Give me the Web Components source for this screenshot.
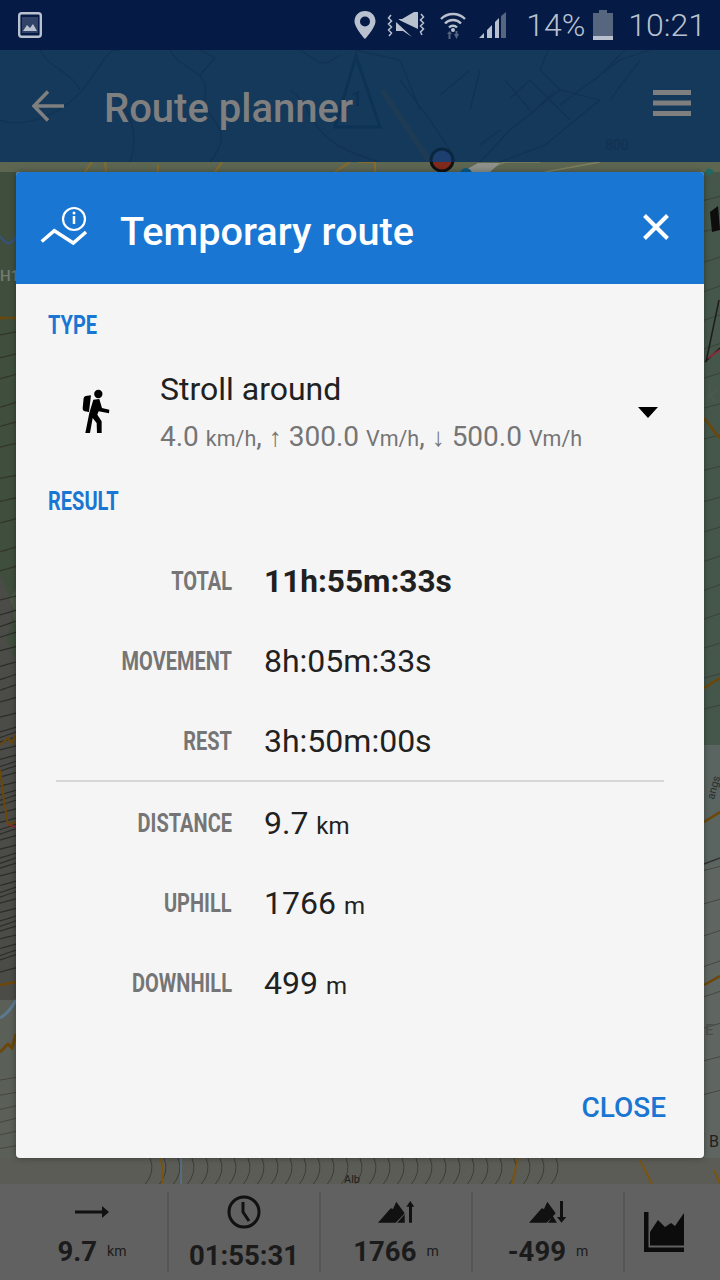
<!DOCTYPE html>
<html><head><meta charset="utf-8"><style>
html,body{margin:0;padding:0;width:720px;height:1280px;overflow:hidden;background:#555;font-family:Roboto,"Liberation Sans",sans-serif}
</style></head><body>
<route-screen></route-screen>
<script>
function def(name,css,html,extra){
  customElements.define(name,class extends HTMLElement{
    constructor(){super();this.attachShadow({mode:'open'}).innerHTML='<style>'+css+'</style>'+html;}
    connectedCallback(){if(extra)extra(this.shadowRoot,this);}
  });
}
/* map canvas */
function wave(y,amp,seed,x0,x1,slope){
  let d='';
  for(let x=x0;x<=x1;x+=4){
    const yy=y+amp*Math.sin(x/37+seed)+(slope||0)*(x-x0);
    d+=(d?'L':'M')+x+' '+yy.toFixed(1);
  }
  return d;
}
def('map-canvas',`:host{display:block;position:absolute;inset:0}svg{display:block}text{font-family:Roboto,sans-serif}`,
`<svg width="720" height="1280" viewBox="0 0 720 1280">
<rect width="720" height="1280" fill="#4d5a47"/>
<rect x="0" y="160" width="720" height="14" fill="#5d6651"/>
<path d="M0 172H16V590L8 600 16 625V1160H0Z" fill="#404f3d"/>
<path d="M0 575L14 610 6 640 16 660V1000L0 1010Z" fill="#4b4b48"/>
<rect x="0" y="1000" width="16" height="160" fill="#5a5f58"/>
<rect x="704" y="172" width="16" height="580" fill="#45574b"/>
<rect x="704" y="745" width="16" height="415" fill="#5f6560"/>
<rect x="704" y="745" width="16" height="120" fill="#566461" opacity=".6"/>
<rect x="0" y="1158" width="720" height="30" fill="#5c5c56"/>
<g id="c" fill="none"></g>
<path d="M0 236Q10 250 16 236" stroke="#35537f" stroke-width="2" fill="none"/>
<path d="M0 318H16" stroke="#6c4708" stroke-width="2.5" stroke-dasharray="7 2" fill="none"/>
<path d="M0 745L8 738 12 743 16 734M0 770L4 800 8 825 16 822" stroke="#6c4708" stroke-width="2" fill="none"/>
<path d="M8 825l8 2" stroke="#8a2c3a" stroke-width="1.5" fill="none"/>
<path d="M0 985L16 982" stroke="#6c4708" stroke-width="2.5" fill="none"/>
<path d="M0 1018Q10 1012 16 1000" stroke="#5b7a8f" stroke-width="3" fill="none"/>
<path d="M0 1052L8 1044 12 1048 16 1034" stroke="#6c4708" stroke-width="3" fill="none"/>
<path d="M704 418L712 428 716 434 720 438" stroke="#6c4708" stroke-width="2.5" fill="none"/>
<path d="M704 688L720 678M704 822L720 812M704 985L720 976" stroke="#6c4708" stroke-width="2.5" fill="none"/>
<path d="M704 864L720 858" stroke="#333" stroke-width="1.5" fill="none"/>
<path d="M719 300L706 362M705 362L720 348" stroke="#1d1d1d" stroke-width="1.5" fill="none"/>
<path d="M708 358L720 350" stroke="#8a2c3a" stroke-width="2" fill="none"/>
<path d="M85 172L92 162M105 162L106 172M215 172L222 162M158 165V172M335 172L350 162M358 162H375V172" stroke="#8a6a28" stroke-width="2" fill="none"/>
<path d="M480 172L505 162H540M545 172L600 162" stroke="#7d7f5f" stroke-width="1.5" fill="none"/>
<path d="M462 172L478 163H500L490 172Z" fill="#8e918a"/>
<path d="M708 168l6 3-5 5-4-4z" fill="#1f6a62"/>
<circle cx="466" cy="174" r="6" fill="#0c5a83"/>
<circle cx="442" cy="160" r="11" fill="#7f2a1c" stroke="#111" stroke-width="3"/>
<path d="M710 212l8-6 2 24-8 2z" fill="#0d0d0d"/>
<text x="0" y="281" font-size="15" font-weight="500" fill="#757b73">H1</text>
<text x="706" y="402" font-size="22" font-style="italic" fill="#4a5a50">k</text>
<text transform="translate(714 800) rotate(-75)" font-size="11" fill="#2a2e2c">angs</text>
<text x="709" y="1147" font-size="16" fill="#1f1f1f">B</text>
<text x="705" y="1035" font-size="15" fill="#4a4e4a">E</text>
<text x="344" y="1183" font-size="11" fill="#1c1c1c">Alb</text>
</svg>`,(s)=>{
  const g=s.getElementById('c');let h='';
  const add=(y,a,seed,x0,x1,col,w,sl)=>{h+=`<path d="${wave(y,a,seed,x0,x1,sl)}" stroke="${col}" stroke-width="${w}"/>`;};
  for(let y=335,i=0;y<590;y+=24,i++)add(y-i%3*3,2,i,0,16,'#33352c',1.2,-.25);
  for(let y=600,i=0;y<980;y+=(y>720&&y<960?7:13),i++)add(y,2,i*1.4,0,16,'#2c2c29',1.2,-.3);
  for(let y=1080,i=0;y<1160;y+=14,i++)add(y,1.500,i,0,16,'#46463f',1,-.2);
  for(let y=200,i=0;y<740;y+=30,i++)add(y,2,i*.7,704,720,'#38423a',1,-.3);
  for(let y=870,i=0;y<1120;y+=32,i++)add(y,2,i*.9,704,720,'#45483f',1,-.3);
  for(let y=1160,i=0;y<7;y+=4,i++)add(y,5,i*.35,0,720,'#3d3d36',1,0);
  for(let x=150,i=0;x<560;x+=14,i++)h+=`<path d="M${x} 1158q6 14 -6 28" stroke="#3d3d36" stroke-width="1"/>`;
  h+='<path d="M160 1158Q164 1168 162 1184" stroke="#7a5510" stroke-width="2"/><path d="M181 1158V1184" stroke="#557391" stroke-width="1.500"/><path d="M518 1158L512 1184M640 1160L652 1184M714 1170L720 1184" stroke="#7a5510" stroke-width="2"/>';
  g.innerHTML=h;
});
/* status bar */
def('status-bar',`:host{display:flex;align-items:center;height:50px;background:#051a45;color:#b9c1cf;position:relative;font-weight:300;font-size:32px}
.l{margin-left:18px;display:block}.r{margin-left:auto;display:flex;align-items:center;padding-right:14px}
svg{display:block}span{line-height:50px}`,
`<svg class="l" width="24" height="26" viewBox="0 0 24 26"><rect x="1.200" y="1.200" width="21.600" height="23.600" rx="2.500" fill="none" stroke="#b9c1cf" stroke-width="2.400"/><rect x="4" y="5" width="16" height="16" fill="#b9c1cf" opacity=".25"/><path d="M5 19l4-6 3 3 3-4 4 7z" fill="#b9c1cf"/></svg>
<div class="r">
<svg width="22" height="28" viewBox="0 0 22 28"><path fill-rule="evenodd" d="M11 0C4.800 0 .5 4.500.5 10.300.5 17 11 28 11 28s10.500-11 10.500-17.700C21.500 4.500 17.200 0 11 0zm0 5.500a5 5 0 110 10 5 5 0 010-10z" fill="#b9c1cf"/></svg>
<svg style="margin-left:11px" width="38" height="26" viewBox="0 0 38 26"><path d="M10 7H15L27 0H31V17ZM9 10L25 25 16 19H9Z" fill="#b9c1cf"/><path d="M9 6L32 26" stroke="#051a45" stroke-width="1.500"/><path d="M4 3L1.500 6 4.500 9 1.500 12 4.500 15 1.500 18 4.500 21 2 24M34 2L36.500 5 33.500 8 36.500 11 33.500 14 36.500 17 33.500 20 35 23" fill="none" stroke="#b9c1cf" stroke-width="1.500"/></svg>
<svg style="margin-left:14px" width="28" height="27" viewBox="0 0 28 27"><path d="M2 7a17 17 0 0124 0M6 11.500a11 11 0 0116 0M10 15.500a5.500 5.500 0 018 0" fill="none" stroke="#b9c1cf" stroke-width="2.400"/><circle cx="14" cy="18" r="2" fill="#b9c1cf"/><path d="M8 22l2.500-3 2.500 3h-1.500v5h-2v-5zM15 22h1.500v-3h2v3h1.500l-2.500 5z" fill="#56667f"/></svg>
<svg style="margin-left:12px" width="27" height="26" viewBox="0 0 27 26"><path d="M0 26L5 21V26ZM8 26V18L13 13V26Z" fill="#b9c1cf"/><path d="M16 26V10L18 8 20 6V26Z" fill="#b9c1cf"/><path d="M22 26V4L27 0V26Z" fill="#56667f"/></svg>
<span style="margin-left:20px">14%</span>
<svg style="margin-left:8px" width="20" height="30" viewBox="0 0 20 30"><path d="M6 0h8v3h6v27H0V3h6z" fill="#56667f"/><rect y="26" width="20" height="4" fill="#b9c1cf"/></svg>
<span style="margin-left:15px">10:21</span>
</div>`);
/* app bar */
def('app-bar',`:host{display:flex;align-items:center;height:112px;background:#15395b;position:relative;color:#7f7f7f;overflow:hidden}
.bg{position:absolute;left:0;top:0}
.back,.title,.menu{position:relative}
.back{display:block;margin-left:32px}
.title{font-size:40px;font-weight:500;margin-left:39px;line-height:112px;margin-top:6px}
.menu{display:block;margin-left:auto;margin-right:29px;margin-top:-6px}
text{font-family:Roboto,sans-serif}`,
`<svg class="bg" width="720" height="112" viewBox="0 0 720 112" fill="none">
<g stroke="#123252" stroke-width="1.200">
<path d="M0 70C30 80 70 60 90 30S110 0 120 0M170 0C180 20 210 20 205 45S240 75 210 112M40 0C50 20 70 20 80 40M290 40C320 60 300 90 380 112M110 40C130 60 140 80 130 112"/>
<path d="M480 112L510 80 560 40 600 50 545 95 500 112M510 48L530 30 570 70M505 30L530 60M530 65L555 40M548 0L540 20 560 40M480 95L500 80M470 60L480 20M400 30L430 70 450 100"/>
<path d="M560 55L620 10 650 0M595 30L625 0M610 50L640 10M355 0L400 10 420 60"/>
<path d="M200 0L215 8 200 25M300 0C320 12 320 20 340 5M440 45L470 20"/>
</g>
<path d="M382 40L430 112" stroke="#1e3b55" stroke-width="6"/>
<path d="M335 77L356 6 380 77Z" stroke="#0c3355" stroke-width="3"/>
<circle cx="377" cy="47" r="4" fill="#123a5c"/>
<text x="351" y="56" font-size="20" font-weight="700" fill="#0c3355">1</text>
<text x="605" y="100" font-size="14" fill="#11314f">800</text>
<circle cx="442" cy="110" r="11" fill="#1d3f70" stroke="#0b2740" stroke-width="3"/>
</svg>
<svg class="back" width="33" height="32" viewBox="0 0 33 32" fill="none" stroke="#7f7f7f" stroke-width="3.500"><path d="M1.500 16H32M16 1.500L2 16l14 14.500"/></svg>
<span class="title">Route planner</span>
<svg class="menu" width="38" height="26" viewBox="0 0 38 26" fill="#7f7f7f"><rect width="38" height="5"/><rect y="10.500" width="38" height="5"/><rect y="21" width="38" height="5"/></svg>`);
/* dialog */
def('cond-label',`:host{display:block;text-align:right;white-space:nowrap;font-size:25px;font-weight:700;color:#757575;line-height:34px}
span{display:inline-block;transform:scaleX(.8) translateY(1px);transform-origin:var(--o,100%) 50%}`,`<span><slot></slot></span>`);
def('stat-row',`:host{display:grid;grid-template-columns:176px 1fr;column-gap:33px;align-items:center;height:80px;color:#212121;font-size:32px}
.v{white-space:nowrap;margin-left:-1px}::slotted(small){font-size:24px}`,`<cond-label></cond-label><div class="v"><slot></slot></div>`,
(s,el)=>{s.querySelector('cond-label').textContent=el.getAttribute('label');if(el.hasAttribute('strong')){const v=s.querySelector('.v');v.style.fontWeight=700;v.style.fontSize='31.600px';}});
def('route-dialog',`:host{display:flex;flex-direction:column;position:absolute;left:16px;top:172px;width:688px;height:986px;background:#f5f5f5;border-radius:4px;overflow:hidden;box-shadow:0 0 6px rgba(0,0,0,.35)}
header{display:flex;align-items:center;height:112px;background:#1976d2;color:#fff;flex:none}
h1{margin:8px 0 0 30px;font-size:39.700px;font-weight:500;line-height:1}
.ic{display:block;margin-left:24px}
.x{display:block;margin-left:auto;margin-right:35px;margin-top:-2px}
.sec{--o:0;color:#1976d2;margin:0 0 0 32px}
cond-label.sec{text-align:left;color:#1976d2}
.type{display:flex;align-items:center;height:138px;padding-left:64px}
.hiker{display:block;flex:none}
.tx{margin-left:46.700px;flex:1;padding-top:6px}
.n{font-size:32px;color:#212121;line-height:48px}
.d{font-size:28px;color:#757575;line-height:48px;white-space:nowrap}
.d small{font-size:21.500px}
.d i{font-style:normal;font-size:26px}
.tri{display:block;margin-right:46px;margin-top:2px}
.rows{margin-top:23px;padding-left:40px;padding-right:40px}
hr{border:0;height:2px;background:#d6d6d6;margin:-1px 0 1px}
footer{margin-top:auto;padding:0 38px 32px 0;text-align:right;font-size:28px;font-weight:500;color:#1976d2;line-height:36px}`,
`<header>
<svg class="ic" width="50" height="50" viewBox="0 0 50 50" fill="none" stroke="#fff"><circle cx="34" cy="16" r="11" stroke-width="2.200"/><path d="M34 13v8" stroke-width="2.500"/><circle cx="34" cy="10" r="1.500" fill="#fff" stroke="none"/><path d="M1.700 38.500L14.300 27.700 33.300 40 46 29" stroke-width="3.500"/></svg>
<h1>Temporary route</h1>
<svg class="x" width="26" height="26" viewBox="0 0 26 26" fill="none" stroke="#fff" stroke-width="4"><path d="M1.500 1.500l23 23M24.500 1.500l-23 23"/></svg>
</header>
<div style="height:24px;flex:none"></div>
<cond-label class="sec">TYPE</cond-label>
<div class="type">
<svg class="hiker" width="33.300" height="46.700" viewBox="120 85 100 140"><circle cx="175" cy="103" r="12.500"/><path d="M160 120L178 118L186 145L208 150L207 161L176 155L172 165L185 185L185 220L171 220L170 190L158 175L150 220L136 220L148 160Z"/><path d="M137 109L153 107L147 157L134 155Q127 153 128 146L131 115Q132 110 137 109Z"/></svg>
<div class="tx"><div class="n">Stroll around</div><div class="d">4.0 <small>km/h</small>, <i>↑</i> 300.0 <small>Vm/h</small>, <i>↓</i> 500.0 <small>Vm/h</small></div></div>
<svg class="tri" width="20" height="11" viewBox="0 0 20 11"><path d="M0 0h20L10 11z"/></svg>
</div>
<cond-label class="sec" style="margin-top:4px">RESULT</cond-label>
<div class="rows">
<stat-row label="TOTAL" strong>11h:55m:33s</stat-row>
<stat-row label="MOVEMENT">8h:05m:33s</stat-row>
<stat-row label="REST">3h:50m:00s</stat-row>
<hr>
<stat-row label="DISTANCE">9.7 <small>km</small></stat-row>
<stat-row label="UPHILL">1766 <small>m</small></stat-row>
<stat-row label="DOWNHILL">499 <small>m</small></stat-row>
</div>
<footer>CLOSE</footer>`);
/* bottom bar */
def('bar-cell',`:host{display:flex;flex-direction:column;align-items:center;justify-content:flex-end;height:80px;border-left:2px solid #555;box-sizing:border-box;color:#1b1b1b;font-size:27.500px;font-weight:700;line-height:32px;position:relative}
:host([first]){border-left-color:transparent}
::slotted(svg){display:block;position:absolute;top:var(--t,9px)}
.v{white-space:nowrap}::slotted(small){font-size:14px;font-weight:400;margin-left:10px;position:relative;top:-5px}`,`<slot name="i"></slot><div class="v"><slot></slot></div>`);
def('bottom-bar',`:host{display:grid;grid-template-columns:152px 152px 152px 152px 1fr;align-items:center;height:96px;background:#616161;padding-left:15px;box-sizing:border-box;position:relative}
.chart{display:flex;align-items:center;height:80px;border-left:2px solid #555;padding-left:19px}`,
`<bar-cell first><svg slot="i" style="top:13px" width="34" height="14" viewBox="0 0 34 14" fill="#111"><path d="M0 5.500h27V1l7 6-7 6V8.500H0z"/></svg>9.7<small>km</small></bar-cell>
<bar-cell><svg slot="i" style="top:3px" width="34" height="34" viewBox="0 0 34 34" fill="none" stroke="#111" stroke-width="3"><circle cx="17" cy="17" r="15"/><path d="M16 7v10l6 9"/></svg>01:55:31</bar-cell>
<bar-cell><svg slot="i" width="37" height="22" viewBox="0 0 37 22" fill="#111"><path d="M0 21.700L12.700 7.300 15 8 18.300.7 26.700 12.300 17.700 21.700ZM19.300 21.700L26.700 13.300V21.700ZM31 21.700V5.700H28.300L32.300 0 36.300 5.700H34V21.700Z"/></svg>1766<small>m</small></bar-cell>
<bar-cell><svg slot="i" width="38" height="22" viewBox="0 0 38 22" fill="#111"><path d="M0 21.700L12.700 7.300 15 8 18.300.7 26.700 12.300 17.700 21.700ZM19 21.700L23.700 15 28 21.700ZM31 0H34V16H37.300L32.500 21.700 28 16H31Z"/></svg>-499<small>m</small></bar-cell>
<div class="chart"><svg width="40" height="40" viewBox="0 0 40 40"><path d="M0 0H4.500V35.500H40V40H0ZM6 33.500V20L14 8 21 15 27 11 31 14 40 1V33.500Z" fill="#0c0c0c"/></svg></div>`);
/* screen */
def('route-screen',`:host{display:flex;flex-direction:column;width:720px;height:1280px;position:relative;overflow:hidden}
.gap{flex:1}status-bar,app-bar,bottom-bar{position:relative;flex:none}`,
`<map-canvas></map-canvas><status-bar></status-bar><app-bar></app-bar><div class="gap"></div><bottom-bar></bottom-bar><route-dialog></route-dialog>`);
</script>
</body></html>
